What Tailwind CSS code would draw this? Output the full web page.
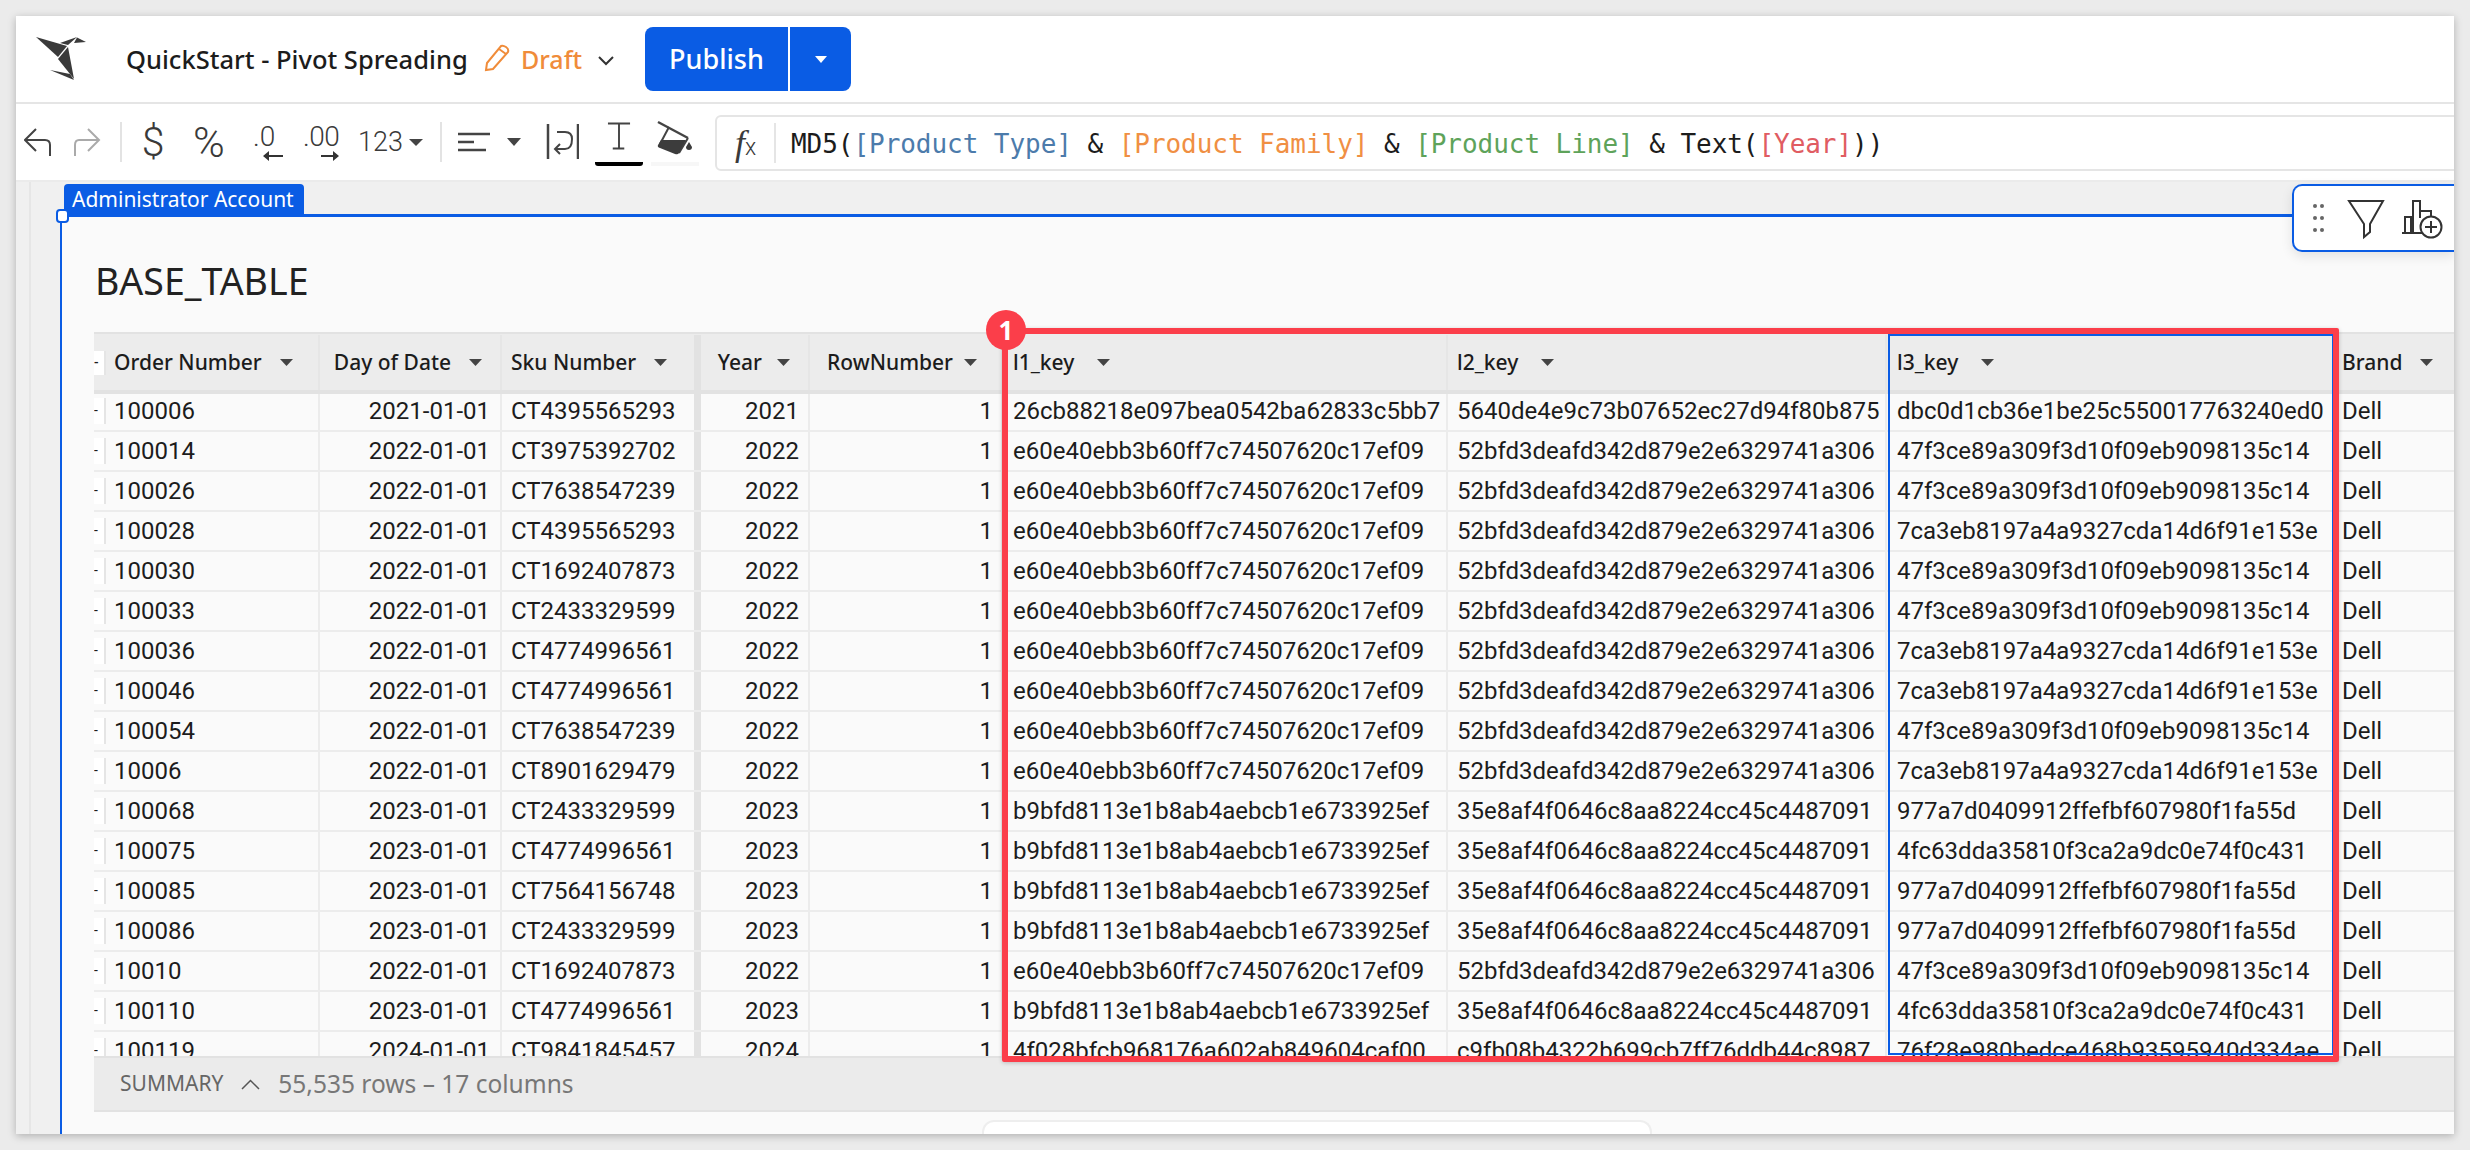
<!DOCTYPE html>
<html lang="en">
<head>
    <meta charset="UTF-8">
    <title>QuickStart - Pivot Spreading</title>
    <script src="https://cdn.jsdelivr.net/npm/@tailwindcss/browser@4"></script>
</head>
<body class="bg-[#ebebeb] w-[2470px] h-[1150px] overflow-hidden font-['Noto_Sans',sans-serif] text-[#1c1c1c]">
    <div class="ml-[16px] mt-[16px] w-[2438px] h-[1118px] relative overflow-hidden flex flex-col bg-white shadow-[0_2px_8px_rgba(0,0,0,0.25)]">

        <!-- top bar -->
        <header class="h-[88px] shrink-0 flex items-center border-b-2 border-[#e5e5e5] relative">
            <svg class="ml-[19px] w-[52px] h-[46px]" viewBox="35 37 52 46" fill="#3a3a3a">
                <path d="M36 38 L67 47 L58 58 Z"/>
                <path d="M60 44 L77 38 L68 46 Z"/>
                <path d="M77 38.500 L86 43 L74 44 Z"/>
                <path d="M68 48 L74 80 L58 60 Z"/>
                <path d="M50 71 L70 75 L74 81 Z"/>
            </svg>
            <span class="ml-[39px] text-[25.500px] font-medium whitespace-nowrap">QuickStart - Pivot Spreading</span>
            <svg class="absolute left-[468px] top-[28px] w-[27px] h-[28px]" viewBox="0 0 27 28" fill="none" stroke="#f08c3a" stroke-width="2">
                <path d="M2 26 L3 19 L17 2 Q19 1 22 3 Q25 5 24 8 L9 25 Z"/>
                <path d="M15 5 L22 10"/>
            </svg>
            <span class="absolute left-[505px] top-[25px] text-[25px] font-medium text-[#f08c3a]">Draft</span>
            <svg class="absolute left-[582px] top-[40px] w-[16px] h-[10px]" viewBox="0 0 16 10" fill="none" stroke="#333" stroke-width="2"><path d="M1 1 L8 8 L15 1"/></svg>
            <div class="absolute left-[629px] top-[11px] w-[206px] h-[64px] rounded-[8px] bg-[#0a5ce4] flex text-white">
                <span class="w-[145px] border-r-2 border-white flex items-center justify-center text-[27px] font-medium">Publish</span>
                <span class="flex-1 flex items-center justify-center">
                    <svg class="w-[12px] h-[7px]" viewBox="0 0 12 7" fill="#fff"><path d="M0 0 H12 L6 7 Z"/></svg>
                </span>
            </div>
        </header>

        <!-- format toolbar -->
        <div class="h-[78px] shrink-0 flex items-center border-b-2 border-[#ebebeb] relative">
            <svg class="ml-[8px] w-[27px] h-[30px]" viewBox="24 129 27 30" fill="none" stroke="#444" stroke-width="2"><path d="M36 131 L25 142 L36 153 M25 142 H45 Q50 142 50 147 V158"/></svg>
            <svg class="ml-[23px] w-[27px] h-[30px]" viewBox="73 129 27 30" fill="none" stroke="#aaa" stroke-width="2"><path d="M87 131 L98 142 L87 153 M98 142 H78 Q74 142 74 147 V158"/></svg>
            <span class="ml-[19px] w-[2px] h-[40px] bg-[#e3e3e3]"></span>
            <span class="ml-[18px] w-[26px] text-center text-[41px] font-light font-['Roboto',sans-serif] text-[#3a3a3a] leading-none">$</span>
            <span class="ml-[23px] w-[38px] text-center text-[43px] font-light font-['Roboto',sans-serif] text-[#3a3a3a] leading-none tracking-[-2px]">%</span>
            <div class="ml-[26px] w-[33px] h-[42px] relative">
                <span class="absolute left-0 top-[-5px] text-[28px] font-light font-['Roboto',sans-serif] text-[#3a3a3a]">.0</span>
                <svg class="absolute left-[10px] bottom-[2px] w-[20px] h-[10px]" viewBox="0 0 20 10" fill="#333"><path d="M6 0 V4 H20 V6 H6 V10 L0 5 Z"/></svg>
            </div>
            <div class="ml-[17px] w-[38px] h-[42px] relative">
                <span class="absolute left-0 top-[-5px] text-[28px] font-light font-['Roboto',sans-serif] text-[#3a3a3a] tracking-[-0.5px]">.00</span>
                <svg class="absolute left-[18px] bottom-[2px] w-[18px] h-[10px]" viewBox="0 0 18 10" fill="#333"><path d="M12 0 V4 H0 V6 H12 V10 L18 5 Z"/></svg>
            </div>
            <span class="ml-[17px] text-[27px] font-['Roboto',sans-serif] font-light text-[#3a3a3a] leading-none">123</span>
            <svg class="ml-[6px] w-[14px] h-[7px]" viewBox="0 0 14 7" fill="#444"><path d="M0 0 H14 L7 7 Z"/></svg>
            <span class="ml-[17px] w-[2px] h-[40px] bg-[#e3e3e3]"></span>
            <svg class="ml-[16px] w-[33px] h-[20px]" viewBox="458 132 33 20" stroke="#444" stroke-width="2.500"><path d="M458 134 H490 M458 142 H474 M458 150 H486"/></svg>
            <svg class="ml-[16px] w-[14px] h-[8px]" viewBox="0 0 14 8" fill="#444"><path d="M0 0 H14 L7 8 Z"/></svg>
            <svg class="ml-[25px] w-[33px] h-[38px]" viewBox="545 124 33 38" fill="none" stroke="#444" stroke-width="2.500"><path d="M547 125 V160 M577 125 V160"/><path stroke-width="2" d="M556 133 H564 Q571 133 571 140 Q571 150 564 150 H554 M559 145 L554 150 L559 155"/></svg>
            <div class="ml-[16px] w-[48px] h-[40px] relative flex justify-center">
                <svg class="w-[24px] h-[28px]" viewBox="606 129 25 28" fill="none" stroke="#444" stroke-width="2"><path d="M607 130 H630 M618.500 130 V156 M612 156 H624"/></svg>
                <span class="absolute left-0 bottom-[-4px] w-[48px] h-[4px] rounded-b-[3px] bg-black"></span>
            </div>
            <div class="ml-[8px] w-[48px] h-[44px] relative flex justify-center">
                <svg class="w-[36px] h-[36px]" viewBox="656 124 36 36" fill="none"><path d="M657 126 L687 142" stroke="#444" stroke-width="2.500"/><path d="M668 131 L659 148 M687 142 L678 157" stroke="#444" stroke-width="2"/><path d="M660 144 L685 144 L678 157 Q677 159 674 158 L659 152 Q656 151 657 149 Z" fill="#3c3c3c"/><path d="M688 146 L691 151 Q691 154 688 154 Q685 154 685 151 Z" fill="#3c3c3c"/></svg>
                <span class="absolute left-0 bottom-[-2px] w-[48px] h-[4px] bg-[#f7f7f7]"></span>
            </div>

            <!-- formula bar -->
            <div class="absolute left-[699px] top-[11px] w-[1760px] h-[56px] border-2 border-[#e5e5e5] rounded-[6px] flex items-center bg-white">
                <span class="ml-[18px] w-[26px] text-[36px] font-['Liberation_Serif',serif] italic text-[#3a3a3a] leading-none whitespace-nowrap">f<span class="text-[23px] not-italic font-['Roboto',sans-serif] font-light">x</span></span>
                <span class="ml-[13px] w-[2px] h-[40px] bg-[#e5e5e5]"></span>
                <span class="ml-[15px] mt-[2px] text-[26px] font-['DejaVu_Sans_Mono',monospace] tracking-[-0.05px] whitespace-pre">MD5(<span class="text-[#4c7bab]">[Product Type]</span> &amp; <span class="text-[#f08f43]">[Product Family]</span> &amp; <span class="text-[#5ea35a]">[Product Line]</span> &amp; Text(<span class="text-[#e05c62]">[Year]</span>))</span>
            </div>
        </div>

        <!-- canvas -->
        <main class="flex-1 min-h-0 flex bg-[#f0f0f0] relative">
            <div class="w-[15px] shrink-0 border-r-2 border-[#e6e6e6]"></div>
            <div class="w-[29px] shrink-0"></div>
            <div class="flex-1 min-h-0 mt-[32px] bg-[#fafafa] border-t-[3px] border-l-2 border-[#0a5ce4] flex flex-col">
                <div class="h-[115px] shrink-0 pl-[33px] pt-[14px] flex items-center text-[37.500px] text-[#222]">BASE_TABLE</div>
                <div id="table" class="ml-[32px] w-[2360px] relative font-['Roboto',sans-serif] text-[24px]">

                    <div class="relative z-10 -mb-[2px] h-[62px] pt-[1px] grid grid-cols-[226px_182px_192px_7px_109px_193px_445px_439px_446px_121px] bg-[#ececec] border-t-2 border-b-4 border-[#e2e2e2] font-['Noto_Sans',sans-serif] font-medium text-[21px] whitespace-nowrap">
                        <div class="flex items-center border-r-2 border-[#e6e6e6]">
                            <span class="w-[12px] h-[24px] bg-white border-r-2 border-[#e5e5e5] text-[14px] leading-[22px]">-</span>
                            <span class="ml-[8px]">Order Number</span>
                            <svg class="ml-[18px] w-[13px] h-[7px]" viewBox="0 0 13 7" fill="#444"><path d="M0 0 H13 L6.500 7 Z"/></svg>
                        </div>
                        <div class="flex items-center justify-end pr-[18px] border-r-2 border-[#e6e6e6]">
                            <span>Day of Date</span>
                            <svg class="ml-[18px] w-[13px] h-[7px]" viewBox="0 0 13 7" fill="#444"><path d="M0 0 H13 L6.500 7 Z"/></svg>
                        </div>
                        <div class="flex items-center pl-[9px]">
                            <span>Sku Number</span>
                            <svg class="ml-[18px] w-[13px] h-[7px]" viewBox="0 0 13 7" fill="#444"><path d="M0 0 H13 L6.500 7 Z"/></svg>
                        </div>
                        <div class="bg-[#e2e2e2]"></div>
                        <div class="flex items-center justify-end pr-[18px] border-r-2 border-[#e6e6e6]">
                            <span>Year</span>
                            <svg class="ml-[15px] w-[13px] h-[7px]" viewBox="0 0 13 7" fill="#444"><path d="M0 0 H13 L6.500 7 Z"/></svg>
                        </div>
                        <div class="flex items-center justify-end pr-[24px] border-r-2 border-[#e6e6e6]">
                            <span>RowNumber</span>
                            <svg class="ml-[11px] w-[13px] h-[7px]" viewBox="0 0 13 7" fill="#444"><path d="M0 0 H13 L6.500 7 Z"/></svg>
                        </div>
                        <div class="flex items-center pl-[10px] border-r-2 border-[#e6e6e6]">
                            <span>l1_key</span>
                            <svg class="ml-[23px] w-[13px] h-[7px]" viewBox="0 0 13 7" fill="#444"><path d="M0 0 H13 L6.500 7 Z"/></svg>
                        </div>
                        <div class="flex items-center pl-[9px] border-r-2 border-[#e6e6e6]">
                            <span>l2_key</span>
                            <svg class="ml-[23px] w-[13px] h-[7px]" viewBox="0 0 13 7" fill="#444"><path d="M0 0 H13 L6.500 7 Z"/></svg>
                        </div>
                        <div class="flex items-center pl-[10px]">
                            <span>l3_key</span>
                            <svg class="ml-[23px] w-[13px] h-[7px]" viewBox="0 0 13 7" fill="#444"><path d="M0 0 H13 L6.500 7 Z"/></svg>
                        </div>
                        <div class="flex items-center pl-[9px]">
                            <span>Brand</span>
                            <svg class="ml-[18px] w-[13px] h-[7px]" viewBox="0 0 13 7" fill="#444"><path d="M0 0 H13 L6.500 7 Z"/></svg>
                        </div>
                    </div>

                    <div id="rows" class="h-[664px] overflow-hidden"></div>

                    <div class="h-[56px] bg-[#ebebeb] border-y-2 border-[#e2e2e2] flex items-center pl-[26px] font-['Noto_Sans',sans-serif] text-[#666]">
                        <span class="text-[21px]">SUMMARY</span>
                        <svg class="ml-[18px] w-[19px] h-[11px]" viewBox="0 0 19 11" fill="none" stroke="#555" stroke-width="1.500"><path d="M1 10 L9.500 1.500 L18 10"/></svg>
                        <span class="ml-[18px] text-[24.500px] text-[#777]">55,535 rows – 17 columns</span>
                    </div>

                    <!-- highlight boxes -->
                    <div class="absolute z-20 left-[1794px] top-[2px] w-[446px] h-[721px] border-2 border-[#0a5ce4]"></div>
                    <div class="absolute z-30 left-[908px] top-[-4px] w-[1337px] h-[734px] border-[6px] border-[#fb3e4a] rounded-[2px] shadow-[0_1px_4px_rgba(0,0,0,0.2)]"></div>
                    <div class="absolute z-40 left-[892px] top-[-22px] w-[40px] h-[40px] rounded-full bg-[#fb3e4a] text-white flex items-center justify-center font-['Noto_Sans',sans-serif] font-bold text-[26px]">1</div>
                </div>
                <div class="ml-[920px] mt-[8px] w-[670px] h-[16px] bg-white border-t-2 border-x-2 border-[#eeeeee] rounded-t-[12px]"></div>
            </div>

            <!-- selection tag + handle -->
            <div class="absolute left-[48px] top-[2px] w-[240px] h-[30px] rounded-t-[4px] bg-[#0a5ce4] text-white text-[21px] leading-[30px] pl-[8px] whitespace-nowrap">Administrator Account</div>
            <div class="absolute left-[40px] top-[27px] w-[13px] h-[14px] rounded-[4px] bg-white border-2 border-[#0a5ce4]"></div>

            <!-- floating element toolbar -->
            <div class="absolute right-0 top-[2px] w-[162px] h-[68px] bg-white border-2 border-r-0 border-[#0a5ce4] rounded-l-[10px] shadow-[0_4px_12px_rgba(0,0,0,0.1)]">
                <svg class="absolute left-[-2px] top-[-2px] w-[162px] h-[68px]" viewBox="2292 184 162 68" fill="none" stroke="#333" stroke-width="2">
                    <g fill="#666" stroke="none"><circle cx="2315" cy="206" r="2"/><circle cx="2322" cy="206" r="2"/><circle cx="2315" cy="218" r="2"/><circle cx="2322" cy="218" r="2"/><circle cx="2315" cy="230" r="2"/><circle cx="2322" cy="230" r="2"/></g>
                    <path d="M2349 201 H2383 L2370 224 V232 L2364 237 V224 Z"/>
                    <path d="M2402 233 H2422 M2405 233 V217 H2411 V233 M2413 233 V201 H2420 V218 M2421 211 H2431 V216"/>
                    <circle cx="2431" cy="227" r="10.500" fill="#fff"/>
                    <path d="M2431 221 V233 M2425 227 H2437"/>
                </svg>
            </div>
        </main>
    </div>

    <script>
        const K1 = 'e60e40ebb3b60ff7c74507620c17ef09', K2 = '52bfd3deafd342d879e2e6329741a306';
        const B1 = 'b9bfd8113e1b8ab4aebcb1e6733925ef', B2 = '35e8af4f0646c8aa8224cc45c4487091';
        const A = '47f3ce89a309f3d10f09eb9098135c14', C = '7ca3eb8197a4a9327cda14d6f91e153e';
        const D = '977a7d0409912ffefbf607980f1fa55d', E = '4fc63dda35810f3ca2a9dc0e74f0c431';
        const data = [
            ['100006', '2021', 'CT4395565293', '26cb88218e097bea0542ba62833c5bb7', '5640de4e9c73b07652ec27d94f80b875', 'dbc0d1cb36e1be25c550017763240ed0'],
            ['100014', '2022', 'CT3975392702', K1, K2, A],
            ['100026', '2022', 'CT7638547239', K1, K2, A],
            ['100028', '2022', 'CT4395565293', K1, K2, C],
            ['100030', '2022', 'CT1692407873', K1, K2, A],
            ['100033', '2022', 'CT2433329599', K1, K2, A],
            ['100036', '2022', 'CT4774996561', K1, K2, C],
            ['100046', '2022', 'CT4774996561', K1, K2, C],
            ['100054', '2022', 'CT7638547239', K1, K2, A],
            ['10006', '2022', 'CT8901629479', K1, K2, C],
            ['100068', '2023', 'CT2433329599', B1, B2, D],
            ['100075', '2023', 'CT4774996561', B1, B2, E],
            ['100085', '2023', 'CT7564156748', B1, B2, D],
            ['100086', '2023', 'CT2433329599', B1, B2, D],
            ['10010', '2022', 'CT1692407873', K1, K2, A],
            ['100110', '2023', 'CT4774996561', B1, B2, E],
            ['100119', '2024', 'CT9841845457', '4f028bfcb968176a602ab849604caf00', 'c9fb08b4322b699cb7ff76ddb44c8987', '76f28e980bedce468b93595940d334ae'],
        ];
        document.getElementById('rows').innerHTML = data.map(r => `
            <div class="h-[40px] grid grid-cols-[226px_182px_192px_7px_109px_193px_445px_439px_446px_121px] border-b-2 border-[#ececec] whitespace-nowrap overflow-hidden leading-[38px]">
                <div class="flex items-center border-r-2 border-[#ececec]">
                    <span class="w-[12px] h-[26px] bg-white border-r-2 border-[#e5e5e5] text-[14px] leading-[24px]">-</span>
                    <span class="ml-[8px]">${r[0]}</span>
                </div>
                <div class="text-right pr-[10px] border-r-2 border-[#ececec]">${r[1]}-01-01</div>
                <div class="pl-[9px]">${r[2]}</div>
                <div class="bg-[#e2e2e2]"></div>
                <div class="text-right pr-[9px] border-r-2 border-[#ececec]">${r[1]}</div>
                <div class="text-right pr-[8px] border-r-2 border-[#ececec]">1</div>
                <div class="pl-[10px] border-r-2 border-[#ececec]">${r[3]}</div>
                <div class="pl-[9px] border-r-2 border-[#ececec]">${r[4]}</div>
                <div class="pl-[10px]">${r[5]}</div>
                <div class="pl-[9px]">Dell</div>
            </div>`).join('');
    </script>
</body>
</html>
